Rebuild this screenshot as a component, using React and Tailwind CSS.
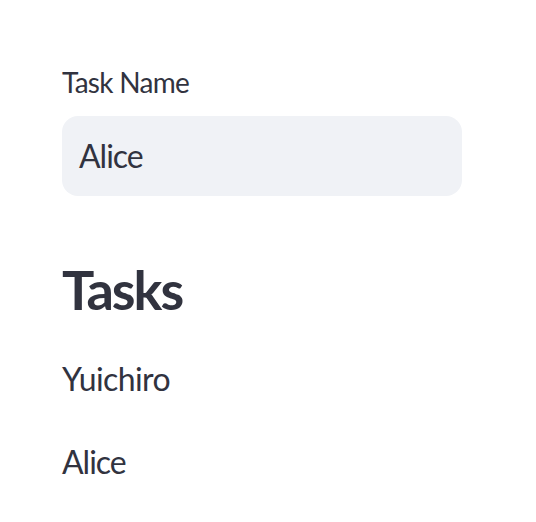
export default function App() {
  return (
    <div
      className="min-h-[522px] w-[536px] bg-white text-[#31333F] pl-[62px] pt-[66px]"
      style={{ fontFamily: "Lato, 'Noto Sans', sans-serif" }}
    >
      <div className="w-[400px]">
        <label className="block text-[28px] leading-[32px] tracking-[-0.7px]">Task Name</label>
        <div className="mt-[18px] h-[80px] rounded-[16px] bg-[#F0F2F6] flex items-center pl-[17px]">
          <span className="text-[32px] leading-[40px] tracking-[-1px]">Alice</span>
        </div>
      </div>
      <h3 className="mt-[62px] text-[54px] leading-[64px] font-bold tracking-[-2px]">Tasks</h3>
      <div className="mt-[37px] flex flex-col gap-[43px]">
        <p className="text-[32px] leading-[40px] tracking-[-0.6px]">Yuichiro</p>
        <p className="text-[32px] leading-[40px] tracking-[-1px]">Alice</p>
      </div>
    </div>
  );
}
